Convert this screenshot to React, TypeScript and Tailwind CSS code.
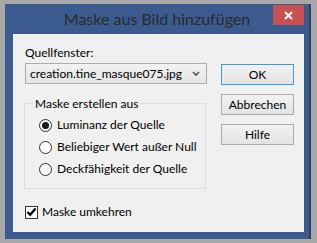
import React from "react";

const font = { fontFamily: 'Lato, "Noto Sans", sans-serif' };

function Radio({ checked, label }: { checked?: boolean; label: string }) {
  return (
    <div className="flex items-center h-[22px]">
      <div className="w-[13px] h-[13px] rounded-full border border-[#333] bg-white flex items-center justify-center">
        {checked && <div className="w-[7px] h-[7px] rounded-full bg-[#1a1a1a]" />}
      </div>
      <span className="ml-[5px] text-[12px] text-black whitespace-nowrap">{label}</span>
    </div>
  );
}

function Button({ label, primary }: { label: string; primary?: boolean }) {
  return (
    <button
      className={
        "w-[73px] h-[21px] text-[12px] text-black bg-gradient-to-b from-[#f2f2f2] to-[#e3e3e3] border " +
        (primary ? "border-[#3c9be5]" : "border-[#acacac]")
      }
    >
      {label}
    </button>
  );
}

export default function App() {
  return (
    <div className="w-[317px] h-[243px] bg-[#a8a8a8] pl-[5px] pt-[4px] overflow-hidden" style={font}>
      <div className="w-[306px] h-[235px] bg-[#3b5b8f] border-r-2 border-[#2d4266] flex flex-col">
        <div className="relative h-[30px] flex items-center justify-center">
          <span className="text-[16px] text-[#2a2a2a] -mt-[1px] whitespace-nowrap">Maske aus Bild hinzufügen</span>
          <div className="absolute right-[5px] top-[1px] w-[31px] h-[20px] bg-[#c75050] flex items-center justify-center">
            <svg width="9" height="9" viewBox="0 0 9 9">
              <path d="M1 1 L8 8 M8 1 L1 8" stroke="white" strokeWidth="2" />
            </svg>
          </div>
        </div>
        <div className="ml-[8px] w-[291px] h-[198px] bg-[#f0f0f0] flex">
          <div className="ml-[11px] w-[183px] flex flex-col">
            <div className="mt-[11px] h-[16px] text-[12px] text-black leading-[16px] pl-[1px]">Quellfenster:</div>
            <div className="mt-[2px] ml-[1px] w-[182px] h-[21px] border border-[#acacac] bg-gradient-to-b from-[#f2f2f2] to-[#e5e5e5] flex items-center justify-between pl-[4px] pr-[6px]">
              <span className="text-[12px] text-black whitespace-nowrap">creation.tine_masque075.jpg</span>
              <svg width="8" height="6" viewBox="0 0 8 6">
                <path d="M1 1 L4 4 L7 1" stroke="#555" strokeWidth="1.6" fill="none" />
              </svg>
            </div>
            <fieldset className="mt-[12px] w-[182px] h-[93px] border border-[#dcdcdc] pl-[14px] pr-[4px]">
              <legend className="px-[2px] ml-[-6px] text-[12px] text-black leading-[15px]">Maske erstellen aus</legend>
              <div className="mt-[3px] flex flex-col">
                <Radio checked label="Luminanz der Quelle" />
                <Radio label="Beliebiger Wert außer Null" />
                <Radio label="Deckfähigkeit der Quelle" />
              </div>
            </fieldset>
            <div className="mt-[14px] ml-[1px] flex items-center">
              <div className="w-[13px] h-[13px] border border-[#333] bg-white flex items-center justify-center">
                <svg width="11" height="10" viewBox="0 0 11 10">
                  <path d="M1.5 5 L4.2 7.8 L9.5 1.5" stroke="#000" strokeWidth="2.2" fill="none" />
                </svg>
              </div>
              <span className="ml-[4px] text-[12px] text-black">Maske umkehren</span>
            </div>
          </div>
          <div className="ml-[14px] mt-[30px] flex flex-col gap-[9px]">
            <Button primary label="OK" />
            <Button label="Abbrechen" />
            <Button label="Hilfe" />
          </div>
        </div>
      </div>
    </div>
  );
}
